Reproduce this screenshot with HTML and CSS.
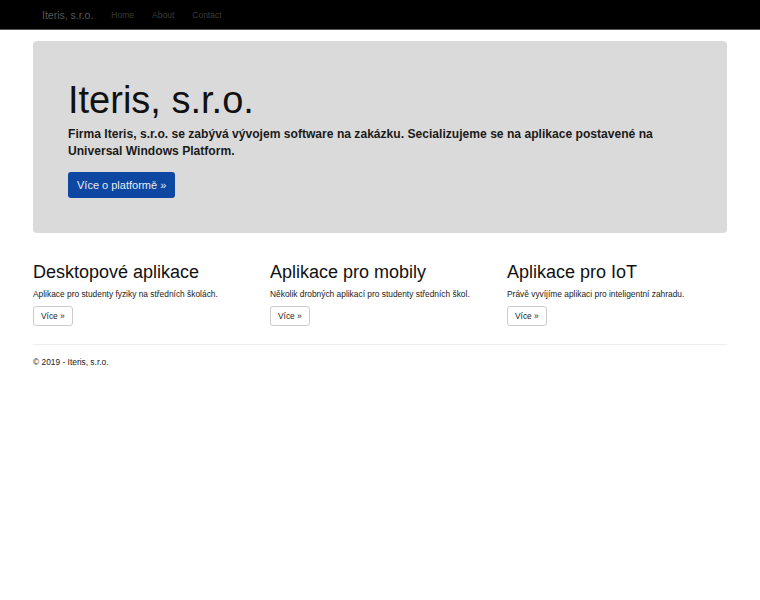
FILE: index.html
```html
<!DOCTYPE html>
<html lang="cs">
<head>
<meta charset="utf-8">
<title>Iteris, s.r.o.</title>
<link rel="stylesheet" href="styles.css">
</head>
<body>
<nav class="navbar">
  <div class="nav-inner">
    <a class="brand" href="#">Iteris, s.r.o.</a>
    <a class="nav-link" href="#">Home</a>
    <a class="nav-link" href="#">About</a>
    <a class="nav-link" href="#">Contact</a>
  </div>
</nav>
<main class="container">
  <section class="jumbotron">
    <h1>Iteris, s.r.o.</h1>
    <p class="lead">Firma Iteris, s.r.o. se zabývá vývojem software na zakázku. Secializujeme se na aplikace postavené na Universal Windows Platform.</p>
    <a class="btn-primary" href="#">Více o platformě »</a>
  </section>
  <section class="row">
    <div class="col">
      <h2>Desktopové aplikace</h2>
      <p>Aplikace pro studenty fyziky na středních školách.</p>
      <a class="btn-default" href="#">Více »</a>
    </div>
    <div class="col">
      <h2>Aplikace pro mobily</h2>
      <p>Několik drobných aplikací pro studenty středních škol.</p>
      <a class="btn-default" href="#">Více »</a>
    </div>
    <div class="col">
      <h2>Aplikace pro IoT</h2>
      <p>Právě vyvíjíme aplikaci pro inteligentní zahradu.</p>
      <a class="btn-default" href="#">Více »</a>
    </div>
  </section>
  <hr class="sep">
  <footer class="footer">© 2019 - Iteris, s.r.o.</footer>
</main>
</body>
</html>
```

FILE: styles.css
```css
html, body {
  margin: 0;
  padding: 0;
  background: #fff;
  font-family: "Liberation Sans", Arial, sans-serif;
  color: #222;
}
a { text-decoration: none; }

.navbar {
  background: #000;
  height: 30px;
  border-bottom: 1px solid #555;
  box-sizing: border-box;
}
.nav-inner {
  display: flex;
  align-items: center;
  height: 29px;
  padding-left: 42px;
}
.brand {
  color: #575757;
  font-size: 10.5px;
  margin-right: 18px;
}
.nav-link {
  color: #3c3c3c;
  font-size: 8.5px;
  margin-right: 18px;
}

.container {
  width: 694px;
  margin: 0 auto;
  padding-top: 11px;
}
.jumbotron {
  background: #dadada;
  border-radius: 4px;
  padding: 37px 35px 35px 35px;
  height: 192px;
  box-sizing: border-box;
}
.jumbotron h1 {
  margin: 0;
  font-weight: normal;
  font-size: 38px;
  line-height: 44px;
  color: #111;
}
.lead {
  margin: 4px 0 12px;
  font-size: 12.1px;
  font-weight: bold;
  line-height: 17px;
  color: #1a1a1a;
}
.btn-primary {
  display: inline-block;
  background: #0d47a1;
  color: #e8ecf5;
  font-size: 11px;
  line-height: 26px;
  height: 26px;
  padding: 0 9px;
  border-radius: 3px;
}

.row {
  display: grid;
  grid-template-columns: repeat(3, 237px);
  margin-right: -17px;
  margin-top: 28px;
}
.col h2 {
  margin: 0;
  font-weight: normal;
  font-size: 18px;
  line-height: 22px;
  color: #111;
}
.col p {
  margin: 6px 0 5px;
  font-size: 8.4px;
  line-height: 11px;
  color: #222;
}
.btn-default {
  display: inline-block;
  font-size: 8.4px;
  color: #222;
  border: 1px solid #ccc;
  border-radius: 3px;
  height: 20px;
  line-height: 18px;
  padding: 0 7px;
  box-sizing: border-box;
}
.sep {
  border: 0;
  border-top: 1px solid #eee;
  margin: 18px 0 12px;
}
.footer {
  font-size: 8.4px;
  color: #222;
}
```
